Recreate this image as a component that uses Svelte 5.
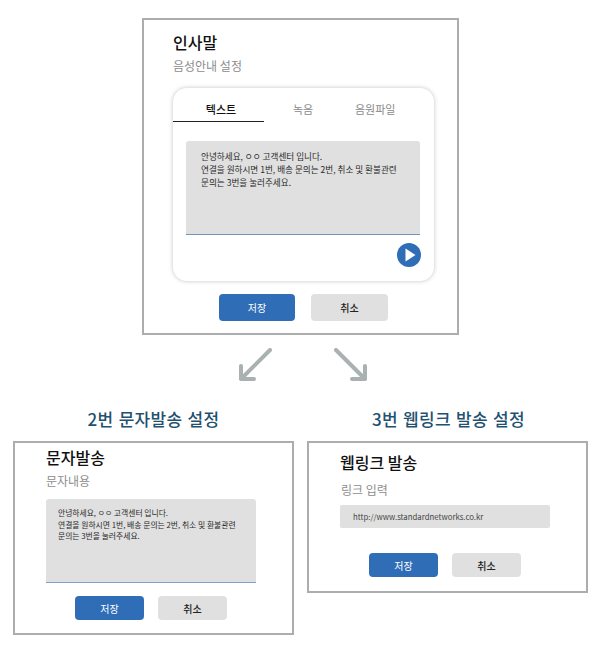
<script>
  const greeting = ['안녕하세요, ㅇㅇ 고객센터 입니다.', '연결을 원하시면 1번, 배송 문의는 2번, 취소 및 환불관련', '문의는 3번을 눌러주세요.'];
</script>

<main class="page">
  <section class="frame top">
    <h2 class="title">인사말</h2>
    <p class="sub">음성안내 설정</p>
    <div class="panel">
      <div class="tabs">
        <span class="tab active">텍스트</span>
        <span class="tab mid">녹음</span>
        <span class="tab last">음원파일</span>
      </div>
      <div class="box large">
        {#each greeting as line}<div>{line}</div>{/each}
      </div>
      <div class="play-row">
        <svg class="play" width="24" height="24" viewBox="0 0 24 24" aria-hidden="true">
          <circle cx="12" cy="12" r="12" fill="#2f6db7" />
          <path d="M8.5 5.5 L18.5 12 L8.5 18.5 Z" fill="#fff" />
        </svg>
      </div>
    </div>
    <div class="buttons big">
      <button class="save">저장</button>
      <button class="cancel">취소</button>
    </div>
  </section>

  <div class="arrows">
    <svg width="130" height="34" viewBox="0 0 130 34" aria-hidden="true">
      <g fill="none" stroke="#a9b1b1" stroke-width="4" stroke-linecap="round" stroke-linejoin="round">
        <path d="M32 2 L3 31 M3 18 V31 H16" />
        <path d="M98 2 L127 31 M127 18 V31 H114" />
      </g>
    </svg>
  </div>

  <div class="columns">
    <div class="col">
      <h3 class="heading">2번 문자발송 설정</h3>
      <section class="frame small sms">
        <h2 class="title">문자발송</h2>
        <p class="sub">문자내용</p>
        <div class="box medium">
          {#each greeting as line}<div>{line}</div>{/each}
        </div>
        <div class="buttons">
          <button class="save">저장</button>
          <button class="cancel">취소</button>
        </div>
      </section>
    </div>
    <div class="col">
      <h3 class="heading">3번 웹링크 발송 설정</h3>
      <section class="frame small web">
        <h2 class="title">웹링크 발송</h2>
        <p class="sub">링크 입력</p>
        <div class="input">http://www.standardnetworks.co.kr</div>
        <div class="buttons">
          <button class="save">저장</button>
          <button class="cancel">취소</button>
        </div>
      </section>
    </div>
  </div>
</main>

<style>
  :global(body) {
    margin: 0;
    background: #fff;
    font-family: "Noto Sans CJK KR", "Noto Sans", sans-serif;
  }
  .page {
    width: 600px;
    height: 650px;
    box-sizing: border-box;
    padding-top: 18px;
    overflow: hidden;
    color: #222;
  }
  .frame {
    box-sizing: border-box;
    background: #fff;
    border: 2px solid #adadad;
  }
  .top {
    width: 317px;
    height: 317px;
    margin-left: 142px;
    padding: 10px 24px 0 29px;
  }
  .title {
    margin: 0;
    font-size: 16px;
    line-height: 24px;
    font-weight: 500;
    color: #111;
  }
  .sub {
    margin: 0;
    font-size: 12px;
    line-height: 18px;
    color: #8d8d8d;
  }
  .top .sub {
    margin-top: 3px;
  }
  .panel {
    box-sizing: border-box;
    width: 261px;
    height: 193px;
    margin-top: 13px;
    padding-top: 10px;
    background: #fff;
    border-radius: 14px;
    box-shadow: 0 0 4px rgba(90, 80, 80, 0.35);
  }
  .tabs {
    display: grid;
    grid-template-columns: 91px 78px 92px;
    height: 24px;
    font-size: 11px;
    line-height: 23px;
    color: #8a8a8a;
    text-align: center;
  }
  .tab.active {
    border-bottom: 1px solid #222;
    color: #111;
    font-weight: 500;
    padding-left: 5px;
    box-sizing: border-box;
  }
  .tab.last {
    text-align: left;
    padding-left: 13px;
    box-sizing: border-box;
  }
  .box {
    box-sizing: border-box;
    background: #e0e0e0;
    border-radius: 3px 3px 0 0;
    color: #2a2a2a;
  }
  .box.large {
    width: 234px;
    height: 94px;
    margin: 19px 0 0 13px;
    padding: 9px 4px 0 15px;
    font-size: 8.6px;
    line-height: 13px;
    border-bottom: 1px solid #6f94bd;
  }
  .play-row {
    display: flex;
    justify-content: flex-end;
    padding: 8px 14px 0 0;
  }
  .play {
    display: block;
    margin-right: -1px;
  }
  .buttons {
    display: flex;
    gap: 14px;
  }
  .buttons.big {
    gap: 16px;
    margin: 13px 0 0 46px;
  }
  button {
    width: 69px;
    height: 24px;
    padding: 0;
    border: 0;
    border-radius: 4px;
    font-family: inherit;
    font-size: 10px;
  }
  .big button {
    width: 76px;
    height: 27px;
  }
  .big .cancel {
    width: 77px;
  }
  .save {
    background: #2f6db7;
    color: #fff;
  }
  .cancel {
    background: #e0e0e0;
    color: #222;
    font-weight: 500;
  }
  .arrows {
    height: 34px;
    margin: 13px 0 0 238px;
  }
  .arrows svg {
    display: block;
  }
  .columns {
    display: flex;
    gap: 13px;
    margin-top: 24px;
    padding-left: 13px;
  }
  .col {
    width: 281px;
  }
  .heading {
    margin: 0 0 9px;
    height: 26px;
    font-size: 17px;
    line-height: 26px;
    font-weight: 500;
    text-align: center;
    color: #1f5170;
    letter-spacing: 0.3px;
    word-spacing: 1px;
  }
  .small {
    width: 281px;
  }
  .col + .col .heading {
    padding-left: 2px;
  }
  .sms {
    height: 194px;
    padding: 2px 0 0 31px;
  }
  .sms .sub {
    margin-top: 3px;
  }
  .box.medium {
    width: 210px;
    height: 84px;
    margin-top: 9px;
    padding: 8px 6px 0 12px;
    font-size: 7.8px;
    line-height: 11.5px;
    border-bottom: 1px solid #7fa3c9;
  }
  .sms .buttons {
    margin: 13px 0 0 29px;
  }
  .web {
    height: 152px;
    padding: 7px 0 0 31px;
  }
  .web .sub {
    margin-top: 7px;
    padding-left: 1px;
  }
  .input {
    box-sizing: border-box;
    width: 210px;
    height: 23px;
    margin-top: 6px;
    padding-left: 13px;
    background: #e0e0e0;
    border-radius: 2px;
    font-size: 7.8px;
    line-height: 23px;
    color: #444;
  }
  .web .buttons {
    margin: 25px 0 0 29px;
  }
</style>
